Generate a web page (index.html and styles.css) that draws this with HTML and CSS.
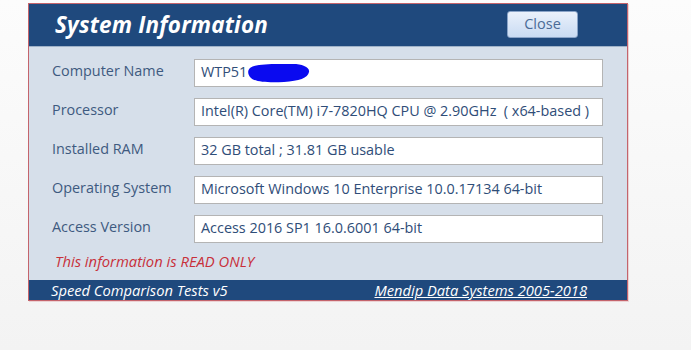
FILE: index.html
```html
<!DOCTYPE html>
<html>
<head>
<meta charset="utf-8">
<link rel="stylesheet" href="styles.css">
</head>
<body>
<div class="dialog">
  <div class="header">
    <div class="title">System Information</div>
    <button class="close">Close</button>
  </div>
  <div class="content">
    <div class="row">
      <div class="label">Computer Name</div>
      <div class="box">WTP51<svg class="scribble" width="64" height="22" viewBox="0 0 64 22"><path d="M3 6 C10 1 30 2 46 2 C55 2 63 5 62 10 C61 16 52 19 37 20 C22 21 8 20 4 16 C1 13 0 9 3 6 Z" fill="#0a0af0"/></svg></div>
    </div>
    <div class="row">
      <div class="label">Processor</div>
      <div class="box">Intel(R) Core(TM) i7-7820HQ CPU @ 2.90GHz&nbsp; ( x64-based )</div>
    </div>
    <div class="row">
      <div class="label">Installed RAM</div>
      <div class="box">32 GB total ; 31.81 GB usable</div>
    </div>
    <div class="row">
      <div class="label">Operating System</div>
      <div class="box">Microsoft Windows 10 Enterprise 10.0.17134 64-bit</div>
    </div>
    <div class="row">
      <div class="label">Access Version</div>
      <div class="box">Access 2016 SP1 16.0.6001 64-bit</div>
    </div>
    <div class="note">This information is READ ONLY</div>
  </div>
  <div class="footer">
    <span class="ftitle">Speed Comparison Tests v5</span>
    <a class="flink">Mendip Data Systems 2005-2018</a>
  </div>
</div>
</body>
</html>
```

FILE: styles.css
```css
html, body {
  margin: 0;
  padding: 0;
  height: 100%;
}
body {
  background: linear-gradient(#fcfcfc, #f3f3f3);
  font-family: "Open Sans", "Liberation Sans", sans-serif;
}
.dialog {
  margin: 3px 0 0 28px;
  width: 598px;
  border: 1px solid #c4646c;
  box-shadow: 1px 1px 0 #ecd2d4;
}
.header {
  height: 42px;
  background: #1f497d;
  display: flex;
  align-items: center;
  justify-content: space-between;
  padding: 0 49px 0 26px;
  border-bottom: 1px solid #9fb2c8;
}
.title {
  color: #ffffff;
  font-style: italic;
  font-weight: bold;
  font-size: 22.4px;
  letter-spacing: 0.2px;
  margin-top: -1px;
}
.close {
  width: 71px;
  height: 27px;
  margin-top: -1px;
  border: 1px solid #8aa4c8;
  border-radius: 3px;
  background: linear-gradient(#eaf1fb, #c9dbf3);
  color: #4b6b96;
  font-family: "Open Sans", "Liberation Sans", sans-serif;
  font-size: 14.5px;
  padding: 0 0 2px;
}
.content {
  background: #d6dfea;
  padding: 12px 24px 9px 23px;
  display: flex;
  flex-direction: column;
  gap: 11px;
}
.row {
  display: flex;
  align-items: center;
  height: 28px;
}
.label {
  width: 142px;
  color: #3e5a80;
  font-size: 14.4px;
  padding-bottom: 5px;
}
.box {
  flex: 1;
  height: 26px;
  box-sizing: border-box;
  height: 28px;
  background: #ffffff;
  border: 1px solid #b4b4b4;
  display: flex;
  align-items: center;
  padding: 0 0 3px 6px;
  color: #2f4d78;
  font-size: 14.4px;
  white-space: nowrap;
}
.scribble {
  margin-left: 0px;
  margin-top: 3px;
}
.note {
  color: #c8303a;
  font-style: italic;
  font-size: 14.8px;
  padding-left: 3px;
  margin-top: -3px;
}
.footer {
  height: 20px;
  background: #1f497d;
  display: flex;
  align-items: center;
  justify-content: space-between;
  padding: 0 40px 0 22px;
  color: #ffffff;
  font-style: italic;
  font-size: 14.7px;
}
.flink {
  text-decoration: underline;
  color: #ffffff;
}
```
